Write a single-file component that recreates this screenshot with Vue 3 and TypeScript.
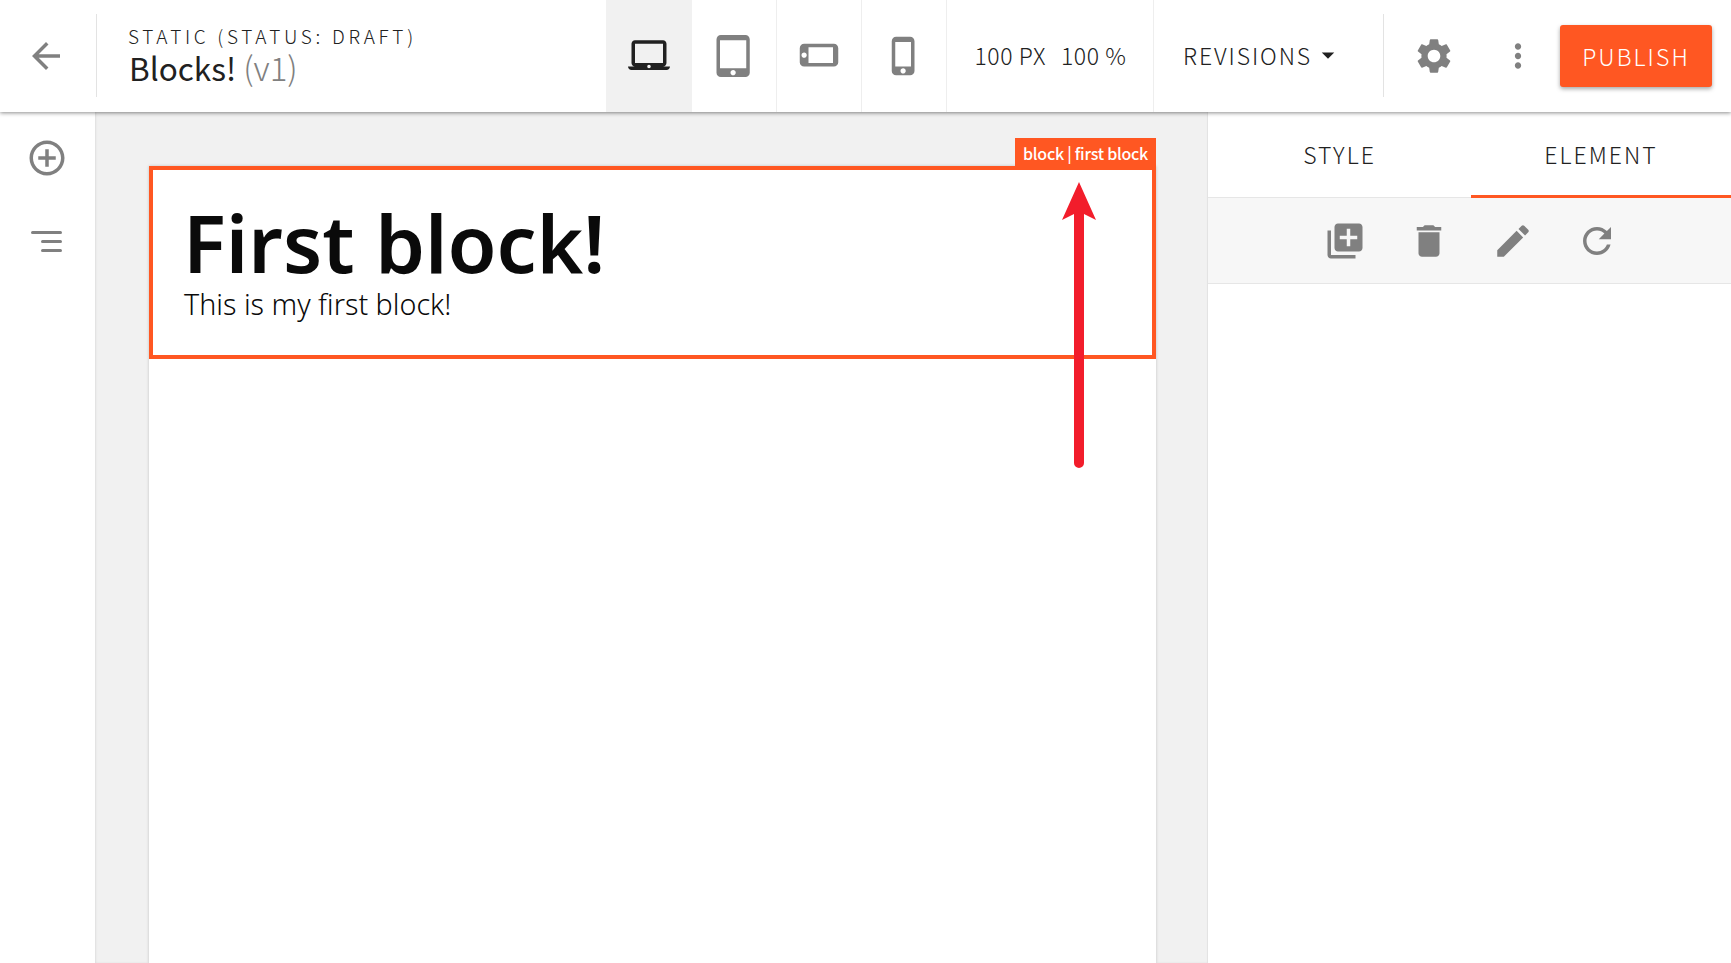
<script setup lang="ts">
const devices = [
  { name: 'laptop', size: 42, path: 'M20 18c1.1 0 1.99-.9 1.99-2L22 5c0-1.1-.9-2-2-2H4c-1.1 0-2 .9-2 2v11c0 1.1.9 2 2 2H0c0 1.1.9 2 2 2h20c1.1 0 2-.9 2-2h-4zM4 5h16v11H4V5zm8 14c-.55 0-1-.45-1-1s.45-1 1-1 1 .45 1 1-.45 1-1 1z' },
  { name: 'tablet', size: 42, path: 'M18.5 0h-14C3.12 0 2 1.12 2 2.5v19C2 22.88 3.12 24 4.5 24h14c1.38 0 2.5-1.12 2.5-2.5v-19C21 1.12 19.88 0 18.5 0zm-7 23c-.83 0-1.5-.67-1.5-1.5s.67-1.5 1.5-1.5 1.5.67 1.5 1.5-.67 1.5-1.5 1.5zm7.5-4H4V3h15v16z' },
  { name: 'landscape', size: 42, rotate: true, path: 'M15.5 1h-8C6.12 1 5 2.12 5 3.5v17C5 21.88 6.12 23 7.5 23h8c1.38 0 2.5-1.12 2.5-2.5v-17C18 2.12 16.88 1 15.5 1zm-4 21c-.83 0-1.5-.67-1.5-1.5s.67-1.5 1.5-1.5 1.5.67 1.5 1.5-.67 1.5-1.5 1.5zm4.5-4H7V4h9v14z' },
  { name: 'phone', size: 42, path: 'M15.5 1h-8C6.12 1 5 2.12 5 3.5v17C5 21.88 6.12 23 7.5 23h8c1.38 0 2.5-1.12 2.5-2.5v-17C18 2.12 16.88 1 15.5 1zm-4 21c-.83 0-1.5-.67-1.5-1.5s.67-1.5 1.5-1.5 1.5.67 1.5 1.5-.67 1.5-1.5 1.5zm4.5-4H7V4h9v14z' },
]

const tools = [
  'M4 6H2v14c0 1.1.9 2 2 2h14v-2H4V6zm16-4H8c-1.1 0-2 .9-2 2v12c0 1.1.9 2 2 2h12c1.1 0 2-.9 2-2V4c0-1.1-.9-2-2-2zm-1 9h-4v4h-2v-4H9V9h4V5h2v4h4v2z',
  'M6 19c0 1.1.9 2 2 2h8c1.1 0 2-.9 2-2V7H6v12zM19 4h-3.5l-1-1h-5l-1 1H5v2h14V4z',
  'M3 17.25V21h3.75L17.81 9.94l-3.75-3.75L3 17.25zM20.71 7.04c.39-.39.39-1.02 0-1.41l-2.34-2.34c-.39-.39-1.02-.39-1.41 0l-1.83 1.83 3.75 3.75 1.83-1.83z',
  'M17.65 6.35C16.2 4.9 14.21 4 12 4c-4.42 0-7.99 3.58-7.99 8s3.57 8 7.99 8c3.73 0 6.84-2.55 7.73-6h-2.08c-.82 2.33-3.04 4-5.65 4-3.31 0-6-2.69-6-6s2.69-6 6-6c1.66 0 3.14.69 4.22 1.78L13 11h7V4l-2.35 2.35z',
]

const gear = 'M19.14 12.94c.04-.3.06-.61.06-.94 0-.32-.02-.64-.07-.94l2.03-1.58c.18-.14.23-.41.12-.61l-1.92-3.32c-.12-.22-.37-.29-.59-.22l-2.39.96c-.5-.38-1.03-.7-1.62-.94l-.36-2.54c-.04-.24-.24-.41-.48-.41h-3.84c-.24 0-.43.17-.47.41l-.36 2.54c-.59.24-1.13.57-1.62.94l-2.39-.96c-.22-.08-.47 0-.59.22L2.74 8.87c-.12.21-.08.47.12.61l2.03 1.58c-.05.3-.09.63-.09.94s.02.64.07.94l-2.03 1.58c-.18.14-.23.41-.12.61l1.92 3.32c.12.22.37.29.59.22l2.39-.96c.5.38 1.03.7 1.62.94l.36 2.54c.05.24.24.41.48.41h3.84c.24 0 .44-.17.47-.41l.36-2.54c.59-.24 1.13-.56 1.62-.94l2.39.96c.22.08.47 0 .59-.22l1.92-3.32c.12-.22.07-.47-.12-.61l-2.01-1.58zM12 15.6c-1.98 0-3.6-1.62-3.6-3.6s1.62-3.6 3.6-3.6 3.6 1.62 3.6 3.6-1.62 3.6-3.6 3.6z'
</script>

<template>
  <div class="root">
    <header class="topbar">
      <button class="back">
        <svg width="42" height="42" viewBox="0 0 24 24"><path d="M20 11H7.83l5.59-5.59L12 4l-8 8 8 8 1.41-1.41L7.83 13H20v-2z" /></svg>
      </button>
      <div class="title">
        <div class="kind">STATIC (STATUS: DRAFT)</div>
        <div class="name">Blocks! <span>(v1)</span></div>
      </div>
      <div class="devices">
        <button v-for="(d, i) in devices" :key="d.name" class="device" :class="{ active: i === 0 }">
          <svg :class="{ turned: d.rotate }" :width="d.size" :height="d.size" viewBox="0 0 24 24"><path :d="d.path" /></svg>
        </button>
      </div>
      <div class="zoom"><span>100 PX</span><span>100 %</span></div>
      <button class="revisions">
        REVISIONS
        <svg width="30" height="30" viewBox="0 0 24 24"><path d="M7 10l5 5 5-5z" /></svg>
      </button>
      <div class="actions">
        <svg width="42" height="42" viewBox="0 0 24 24"><path :d="gear" /></svg>
        <svg class="more" width="38" height="38" viewBox="0 0 24 24"><path d="M12 8c1.1 0 2-.9 2-2s-.9-2-2-2-2 .9-2 2 .9 2 2 2zm0 2c-1.1 0-2 .9-2 2s.9 2 2 2 2-.9 2-2-.9-2-2-2zm0 6c-1.1 0-2 .9-2 2s.9 2 2 2 2-.9 2-2-.9-2-2-2z" /></svg>
        <button class="publish">PUBLISH</button>
      </div>
    </header>

    <div class="body">
      <aside class="side">
        <svg width="42" height="42" viewBox="0 0 24 24"><path d="M13 7h-2v4H7v2h4v4h2v-4h4v-2h-4V7zm-1-5C6.48 2 2 6.48 2 12s4.48 10 10 10 10-4.48 10-10S17.52 2 12 2zm0 18c-4.41 0-8-3.59-8-8s3.59-8 8-8 8 3.59 8 8-3.59 8-8 8z" /></svg>
        <div class="lines"><i></i><i></i><i></i></div>
      </aside>

      <main class="canvas">
        <div class="page">
          <section class="block">
            <div class="tag">block | first block</div>
            <h1>First block!</h1>
            <p>This is my first block!</p>
          </section>
          <svg class="arrow" width="34" height="286" viewBox="0 0 34 286">
            <path d="M17 0L34 38L22 32V281a5 5 0 0 1-10 0V32L0 38z" />
          </svg>
        </div>
      </main>

      <aside class="panel">
        <div class="tabs">
          <div class="tab">STYLE</div>
          <div class="tab current">ELEMENT</div>
        </div>
        <div class="tools">
          <button v-for="t in tools" :key="t" class="tool">
            <svg width="42" height="42" viewBox="0 0 24 24"><path :d="t" /></svg>
          </button>
        </div>
      </aside>
    </div>
  </div>
</template>

<style scoped>
.root {
  height: 963px;
  overflow: hidden;
  display: flex;
  flex-direction: column;
  background: #fff;
  color: #212121;
  font-family: "Noto Sans CJK SC", "Noto Sans", sans-serif;
}

button {
  border: none;
  background: none;
  padding: 0;
  font: inherit;
  color: inherit;
}

svg {
  display: block;
  fill: #808080;
}

.topbar {
  position: relative;
  z-index: 2;
  flex: none;
  height: 112px;
  display: flex;
  align-items: stretch;
  background: #fff;
  box-shadow: 0 1px 4px rgba(0, 0, 0, 0.45);
}

.back {
  width: 96px;
  flex: none;
  display: flex;
  align-items: center;
  justify-content: center;
  padding-right: 4px;
}

.title {
  width: 510px;
  flex: none;
  margin: 14px 0 15px;
  padding-left: 31px;
  border-left: 1px solid #e3e3e3;
  box-sizing: border-box;
}

.kind {
  font-size: 19px;
  font-weight: 300;
  letter-spacing: 3.7px;
  line-height: 24px;
  margin-top: 10px;
}

.name {
  font-size: 31.5px;
  line-height: 38px;
  margin-left: 1px;
}

.name span {
  color: #808080;
  font-size: 33px;
  font-weight: 300;
}

.devices {
  display: flex;
  flex: none;
}

.device {
  width: 85px;
  display: flex;
  align-items: center;
  justify-content: center;
  border-right: 1px solid #eee;
}

.device.active {
  width: 86px;
  background: #f1f1f1;
  border-right: none;
}

.device.active svg {
  fill: #212121;
}

.turned {
  transform: rotate(90deg);
}

.zoom {
  width: 207px;
  flex: none;
  display: flex;
  justify-content: center;
  align-items: center;
  gap: 15px;
  font-size: 23px;
  font-weight: 300;
  letter-spacing: 0.6px;
  line-height: 1;
  padding-bottom: 2px;
  padding-left: 1px;
  border-right: 1px solid #eee;
  box-sizing: border-box;
}

.revisions {
  width: 229px;
  flex: none;
  display: flex;
  align-items: center;
  padding-left: 29px;
  padding-bottom: 2px;
  box-sizing: border-box;
  font-size: 23px;
  font-weight: 300;
  letter-spacing: 1.9px;
}

.revisions svg {
  fill: #212121;
  margin-left: 1px;
}

.actions {
  flex: 1;
  display: flex;
  align-items: center;
  margin: 14px 0 15px;
  border-left: 1px solid #e3e3e3;
  padding-left: 29px;
}

.more {
  margin-left: 44px;
}

.publish {
  width: 152px;
  height: 62px;
  margin: 1px 0 0 23px;
  border-radius: 3px;
  background: #ff5722;
  color: #fff;
  font-size: 23px;
  font-weight: 300;
  letter-spacing: 2.1px;
  box-shadow: 0 2px 4px rgba(0, 0, 0, 0.35);
}

.body {
  flex: 1;
  display: flex;
  min-height: 0;
}

.side {
  width: 95px;
  flex: none;
  display: flex;
  flex-direction: column;
  align-items: center;
  padding-top: 25px;
  box-sizing: border-box;
  padding-right: 2px;
}

.lines {
  margin-top: 52px;
  width: 31px;
  display: flex;
  flex-direction: column;
  align-items: flex-end;
  gap: 6px;
}

.lines i {
  display: block;
  height: 3px;
  background: #808080;
  border-radius: 2px;
}

.lines i:nth-child(1) { width: 31px; }
.lines i:nth-child(2) { width: 21px; }
.lines i:nth-child(3) { width: 21px; }

.canvas {
  flex: 1;
  background: #f1f1f1;
  padding: 54px 51px 0 54px;
  box-shadow: inset 1px 0 2px rgba(0, 0, 0, 0.08);
}

.page {
  position: relative;
  height: 100%;
  background: #fff;
  box-shadow: 0 0 3px rgba(0, 0, 0, 0.2);
}

.block {
  position: relative;
  height: 193px;
  box-sizing: border-box;
  border: 4px solid #ff5722;
  padding: 28px 31px 0;
  color: #0a0a0a;
}

.block h1 {
  margin: 0 0 0 -1px;
  font-family: "Noto Sans", sans-serif;
  font-size: 79.6px;
  font-weight: 600;
  line-height: 88px;
}

.block p {
  margin: 0;
  font-family: "Noto Sans", sans-serif;
  font-size: 28.7px;
  font-weight: 300;
  line-height: 36px;
}

.tag {
  position: absolute;
  top: -32px;
  right: -4px;
  width: 141px;
  height: 32px;
  background: #ff5722;
  color: #fff;
  font-size: 16px;
  font-weight: 500;
  letter-spacing: -0.25px;
  line-height: 30px;
  text-align: center;
  white-space: nowrap;
}

.arrow {
  position: absolute;
  top: 16px;
  left: 913px;
  fill: #f21d2b;
}

.panel {
  width: 524px;
  flex: none;
  border-left: 1px solid #e3e3e3;
  box-sizing: border-box;
  background: #fff;
}

.tabs {
  display: flex;
  height: 86px;
  border-bottom: 1px solid #e6e6e6;
  box-sizing: border-box;
}

.tab {
  flex: 1;
  display: flex;
  align-items: center;
  justify-content: center;
  padding-bottom: 2px;
  font-size: 23px;
  font-weight: 300;
  letter-spacing: 2px;
}

.tab.current {
  flex: none;
  width: 260px;
  border-bottom: 3px solid #ff5722;
  margin-bottom: -1px;
  padding-bottom: 0;
  box-sizing: border-box;
}

.tools {
  height: 85px;
  display: flex;
  justify-content: center;
  padding-left: 2px;
  background: #f7f7f7;
  border-bottom: 1px solid #e6e6e6;
}

.tool {
  width: 84px;
  display: flex;
  align-items: center;
  justify-content: center;
}
</style>
